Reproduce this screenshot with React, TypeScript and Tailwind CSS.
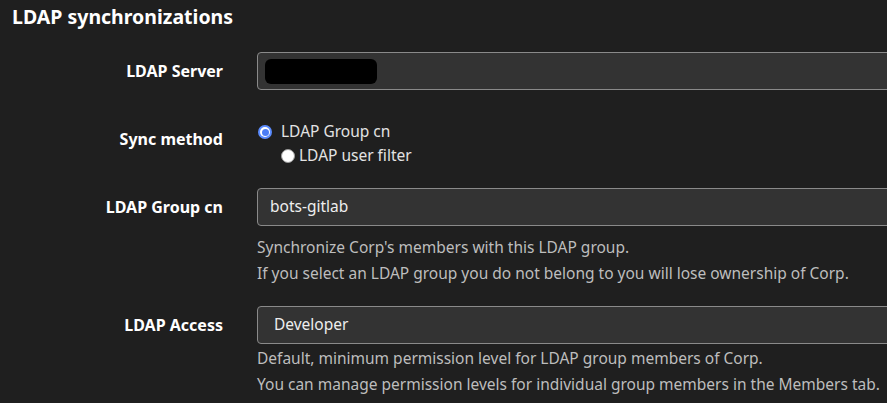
export default function App() {
  return (
    <div
      className="min-h-screen w-full overflow-hidden bg-[#1f1f1f] text-[15.5px] text-[#e3e3e3]"
      style={{ fontFamily: '"Noto Sans", "Open Sans", sans-serif' }}
    >
      <h2 className="px-3 pt-[3px] text-[19.5px] font-bold leading-[27px] text-white">LDAP synchronizations</h2>

      <div className="mt-[22px] grid grid-cols-[223px_1fr] gap-x-[34px]">
        {/* LDAP Server */}
        <label className="pt-[7px] text-right text-[16px] font-bold leading-[24px] text-white">LDAP Server</label>
        <div className="-mr-4 flex h-[38px] items-center rounded-[4px] border border-[#8a8a8a] bg-[#333333] pl-[7px]">
          <div className="h-[25px] w-[112px] rounded-[6px] bg-black" />
        </div>

        {/* Sync method */}
        <label className="mt-[30px] pt-[7px] text-right text-[16px] font-bold leading-[24px] text-white">Sync method</label>
        <div className="mt-[30px] flex flex-col">
          <div className="flex h-[24px] items-center gap-[9px] pl-[1px]">
            <span className="flex h-[14px] w-[14px] items-center justify-center rounded-full bg-[#5b8cff]">
              <span className="flex h-[10px] w-[10px] items-center justify-center rounded-full bg-white">
                <span className="h-[7px] w-[7px] rounded-full bg-[#4b7df5]" />
              </span>
            </span>
            <span>LDAP Group cn</span>
          </div>
          <div className="flex h-[24px] items-center gap-[4px] pl-[24px]">
            <span className="h-[14px] w-[14px] rounded-full border border-[#9a9a9a] bg-white" />
            <span>LDAP user filter</span>
          </div>
        </div>

        {/* LDAP Group cn */}
        <label className="mt-[20px] pt-[7px] text-right text-[16px] font-bold leading-[24px] text-white">LDAP Group cn</label>
        <div className="mt-[20px]">
          <div className="-mr-4 flex h-[38px] items-center rounded-[4px] border border-[#8a8a8a] bg-[#333333] px-[12px] text-[#eeeeee]">
            bots-gitlab
          </div>
          <div className="mt-[8px] leading-[26px] text-[#bdbdbd]">
            <p>Synchronize Corp's members with this LDAP group.</p>
            <p>If you select an LDAP group you do not belong to you will lose ownership of Corp.</p>
          </div>
        </div>

        {/* LDAP Access */}
        <label className="mt-[20px] pt-[7px] text-right text-[16px] font-bold leading-[24px] text-white">LDAP Access</label>
        <div className="mt-[20px]">
          <div className="-mr-4 flex h-[38px] items-center rounded-[4px] border border-[#8a8a8a] bg-[#333333] px-[16px] text-[#eeeeee]">
            Developer
          </div>
          <div className="mt-[1px] leading-[26px] text-[#bdbdbd]">
            <p>Default, minimum permission level for LDAP group members of Corp.</p>
            <p>You can manage permission levels for individual group members in the Members tab.</p>
          </div>
        </div>
      </div>
    </div>
  );
}
